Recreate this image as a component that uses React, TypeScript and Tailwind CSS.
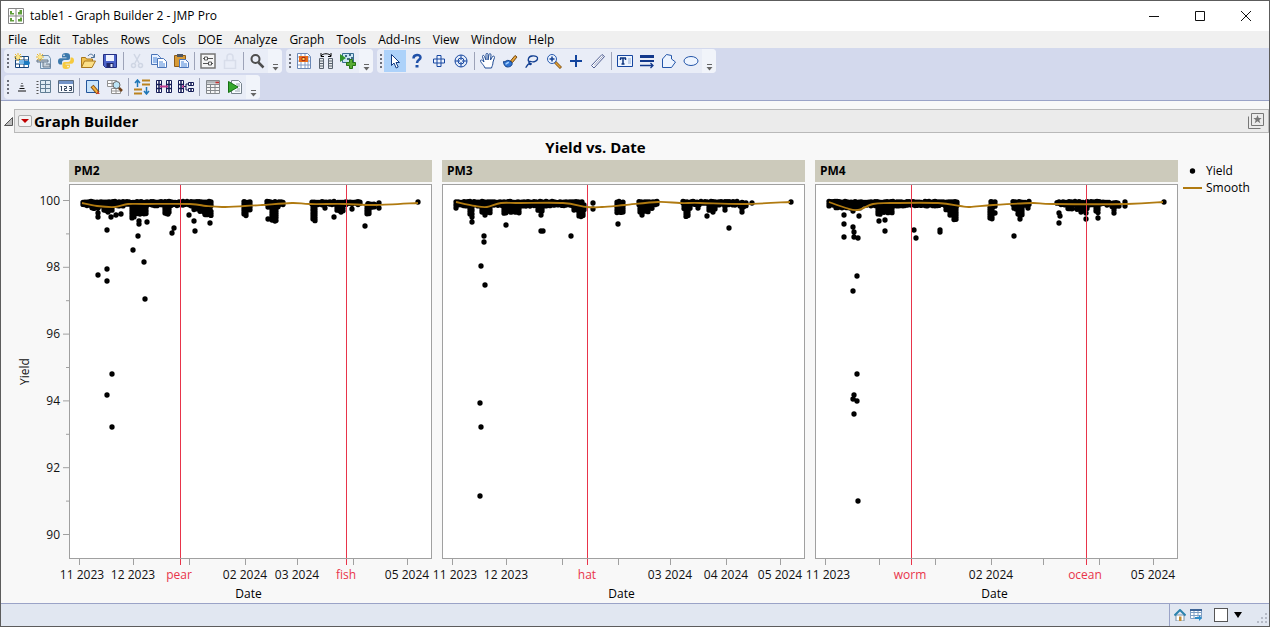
import type { ReactNode } from 'react';
import cn from 'clsx';

type Point = [number, number];
// x from, x to, y from, y to
type Band = [number, number, number, number];
type Label = { x: number; text: string; marker?: boolean };

type Panel = {
  name: string;
  left: number;
  markers: number[];
  labels: Label[];
  bands: Band[];
  points: Point[];
  smooth: Point[];
};

const PLOT_TOP = 184;
const PLOT_WIDTH = 363;
const PLOT_HEIGHT = 375;
const MONTH_TICKS = [10.5, 64.5, 120.5, 176.5, 228.5, 284.5, 338.5];

const menus = [
  'File', 'Edit', 'Tables', 'Rows', 'Cols', 'DOE', 'Analyze',
  'Graph', 'Tools', 'Add-Ins', 'View', 'Window', 'Help',
];

const panels: Panel[] = [
  {
    name: 'PM2',
    left: 69,
    markers: [180.5, 346.5],
    labels: [
      { x: 82, text: '11 2023' },
      { x: 133, text: '12 2023' },
      { x: 179, text: 'pear', marker: true },
      { x: 245, text: '02 2024' },
      { x: 297, text: '03 2024' },
      { x: 346, text: 'fish', marker: true },
      { x: 407, text: '05 2024' },
    ],
    bands: [
      [83, 211, 202, 205], [92, 98, 205, 208], [104, 112, 206, 210], [132, 134, 206, 217],
      [138, 141, 206, 214], [144, 147, 206, 213], [165, 169, 206, 213], [194, 211, 205, 209],
      [200, 211, 208, 212], [205, 211, 211, 215], [244, 250, 202, 209], [244, 247, 208, 215],
      [267, 284, 202, 204], [268, 279, 203, 207], [272, 276, 206, 220], [312, 361, 202, 204],
      [313, 316, 205, 220], [337, 343, 204, 210], [368, 374, 204, 207], [367, 370, 206, 214],
    ],
    points: [
      [98, 213], [98, 217], [111, 217], [116, 215], [121, 214], [107, 230], [108, 212],
      [139, 221], [139, 224], [147, 222], [138, 236], [133, 250], [144, 262], [107, 269],
      [98, 275], [107, 281], [145, 299], [168, 214], [174, 228], [172, 233], [189, 215],
      [194, 221], [195, 231], [210, 223], [112, 374], [107, 395], [112, 427], [268, 219],
      [275, 221], [325, 208], [334, 217], [341, 212], [352, 209], [365, 226], [379, 203],
      [379, 208], [418, 202],
    ],
    smooth: [
      [82, 203], [97, 206], [115, 207], [128, 204], [145, 204], [190, 204], [206, 206],
      [222, 207], [245, 206], [262, 205], [292, 203], [310, 204], [345, 204], [375, 205],
      [418, 203],
    ],
  },
  {
    name: 'PM3',
    left: 442,
    markers: [587.5],
    labels: [
      { x: 455, text: '11 2023' },
      { x: 506, text: '12 2023' },
      { x: 587, text: 'hat', marker: true },
      { x: 670, text: '03 2024' },
      { x: 726, text: '04 2024' },
      { x: 780, text: '05 2024' },
    ],
    bands: [
      [456, 583, 202, 205], [470, 473, 205, 213], [482, 490, 205, 212], [504, 507, 206, 213],
      [511, 519, 205, 212], [538, 543, 205, 210], [574, 584, 205, 210], [579, 584, 209, 216],
      [617, 623, 202, 212], [639, 657, 202, 204], [640, 652, 204, 208], [640, 648, 208, 212],
      [683, 738, 202, 204], [684, 690, 204, 209], [686, 688, 208, 216], [709, 715, 205, 210],
      [740, 746, 203, 206],
    ],
    points: [
      [472, 217], [472, 222], [456, 208], [485, 215], [484, 236], [484, 242], [481, 266],
      [485, 285], [506, 225], [541, 215], [541, 231], [543, 231], [571, 236], [593, 203],
      [593, 209], [618, 224], [480, 403], [481, 427], [480, 496], [642, 215], [698, 208],
      [707, 216], [713, 212], [725, 210], [725, 207], [729, 228], [742, 209], [742, 212],
      [752, 203], [791, 202],
    ],
    smooth: [
      [456, 202], [475, 206], [487, 207], [501, 203], [520, 203], [563, 203], [587, 207],
      [602, 207], [625, 205], [658, 202], [680, 203], [700, 203], [743, 204], [790, 202],
    ],
  },
  {
    name: 'PM4',
    left: 815,
    markers: [911.5, 1086.5],
    labels: [
      { x: 828, text: '11 2023' },
      { x: 910, text: 'worm', marker: true },
      { x: 991, text: '02 2024' },
      { x: 1085, text: 'ocean', marker: true },
      { x: 1153, text: '05 2024' },
    ],
    bands: [
      [829, 957, 202, 205], [836, 860, 204, 207], [878, 880, 205, 214], [884, 892, 205, 212],
      [946, 957, 205, 209], [950, 957, 208, 214], [954, 957, 213, 219], [991, 996, 202, 207],
      [990, 992, 207, 219], [1013, 1030, 202, 205], [1014, 1022, 204, 208],
      [1018, 1023, 207, 215], [1057, 1109, 202, 204], [1068, 1073, 204, 208],
      [1077, 1087, 204, 209], [1096, 1099, 204, 212], [1112, 1118, 203, 206],
    ],
    points: [
      [844, 215], [844, 224], [844, 237], [853, 211], [859, 216], [853, 227], [854, 232],
      [854, 237], [858, 238], [857, 276], [853, 291], [879, 221], [885, 220], [885, 231],
      [914, 230], [916, 238], [940, 230], [940, 232], [857, 374], [854, 395], [853, 399],
      [857, 401], [854, 414], [858, 501], [995, 213], [1014, 236], [1020, 219], [1028, 208],
      [1059, 213], [1060, 216], [1059, 223], [1081, 212], [1086, 213], [1086, 219],
      [1098, 218], [1114, 210], [1114, 213], [1119, 206], [1125, 202], [1125, 206],
      [1164, 202],
    ],
    smooth: [
      [829, 202], [846, 208], [858, 210], [873, 204], [890, 203], [938, 203], [960, 206],
      [970, 207], [993, 205], [1032, 203], [1053, 204], [1127, 204], [1163, 202],
    ],
  },
];

// repeatable noise in -1..1
const noise = (x: number, y: number) => {
  const value = Math.sin(x * 127.1 + y * 311.7) * 43758.5;
  return (value - Math.floor(value)) * 2 - 1;
};

const fillBand = ([x0, x1, y0, y1]: Band) => {
  const result: Point[] = [];
  for (let x = x0; x <= x1; x += 2) {
    for (let y = y0; y < y1; y += 2) {
      result.push([x, y + noise(x, y) * 0.6]);
    }
    result.push([x, y1 + noise(x, y1)]);
  }
  return result;
};

const dotsPath = (points: Point[]) =>
  points.map(([x, y]) => `M${x.toFixed(1)} ${y.toFixed(1)}h0.01`).join('');

const smoothPath = (points: Point[]) =>
  points.slice(1).reduce((d, [x, y], i) => {
    const [px, py] = points[i];
    const [bx, by] = points[i - 1] ?? points[i];
    const [nx, ny] = points[i + 2] ?? [x, y];
    return `${d}C${px + (x - bx) / 6} ${py + (y - by) / 6} ${x - (nx - px) / 6} ${y - (ny - py) / 6} ${x} ${y}`;
  }, `M${points[0][0]} ${points[0][1]}`);

const percent = (value: number, total: number) => `${(value / total) * 100}%`;

const Glyph = ({ children }: { children: ReactNode }) => (
  <svg viewBox="0 0 16 16" className="h-4 w-4" fill="none" aria-hidden="true">
    {children}
  </svg>
);

const GRID = 'M1.5 3.5h13v11h-13zM1.5 7h13M1.5 11h13M5.5 3.5v11M10 3.5v11';
const STAR = 'M4 0v8M0 4h8M1 1l6 6M7 1l-6 6';

const icons: Record<string, ReactNode> = {
  'New Data Table': (
    <>
      <path d={GRID} fill="#fff" stroke="#16457c" />
      <path d="M5 7h5v4h-5z" fill="#79b8e8" />
      <path d="M10 8h4v-2l2 4-2 4v-2h-4z" fill="#1b7ac0" />
      <path d={STAR} stroke="#e9b62c" />
      <circle cx="4" cy="4" r="2" fill="#fbe68a" />
    </>
  ),
  'New Script': (
    <>
      <path d="M4.5 2.5h8l2 3v10h-10z" fill="#dcebf8" stroke="#6f8fae" />
      <path d="M1 7h11v2H1zM7 9v5h7v-3h-4" fill="#c5ced6" stroke="#66798c" />
      <path d={STAR} stroke="#e9b62c" />
      <circle cx="4" cy="4" r="2" fill="#fbe68a" />
    </>
  ),
  'New Python Script': (
    <>
      <path d="M8 0c-3 0-4 1-4 3v1.500h4.500v.8H2.500C1 5.300 0 6.500 0 8.500s1 3 2 3h2V9.500c0-1.500 1-2.500 2.500-2.500h3.500c1.300 0 2-1 2-2V3c0-2-1-3-4-3z" fill="#3b79ad" />
      <path d="M8 16c3 0 4-1 4-3v-1.500H7.500v-.8h6c1.500 0 2.500-1.200 2.500-3.200s-1-3-2-3h-1.500v2c0 1.500-1 2.500-2.500 2.500H6.500c-1.300 0-2 1-2 2v2c0 2 .5 3 3.500 3z" fill="#f6ca3f" />
      <circle cx="6" cy="2.300" r=".8" fill="#fff" />
      <circle cx="10" cy="13.600" r=".8" fill="#fff" />
    </>
  ),
  Open: (
    <>
      <path d="M1.500 14.500v-10h4l1 1.500h6v3" fill="#f2c452" stroke="#a9771d" />
      <path d="M1.500 14.500l3-6.500h11l-3.500 6.500z" fill="#fbdf87" stroke="#a9771d" />
      <path d="M8 3c2-3 5-2 6 1M14.500 1v3.500H11" stroke="#4b6f97" />
    </>
  ),
  Save: (
    <>
      <path d="M1.500 1.500h13v13h-11l-2-2z" fill="#4b63c9" stroke="#242f83" />
      <path d="M4 2h8v6H4z" fill="#eef2ff" />
      <path d="M4.500 10h7v4.500h-7z" fill="#20286b" />
      <path d="M8.500 11h2v3h-2z" fill="#dfe5fa" />
    </>
  ),
  Cut: (
    <>
      <path d="M5 1l5 9M11 1L6 10" stroke="#cfd6e4" strokeWidth="1.500" />
      <circle cx="4.500" cy="12.500" r="2" stroke="#cfd6e4" strokeWidth="1.500" />
      <circle cx="11.500" cy="12.500" r="2" stroke="#cfd6e4" strokeWidth="1.500" />
    </>
  ),
  Copy: (
    <>
      <path d="M.5 1.500h6l3 3v7h-9z" fill="#e8f1ff" stroke="#4a74b8" />
      <path d="M6.500 5.500h6l3 3v6h-9z" fill="#fff" stroke="#4a74b8" />
      <path d="M2 5h4M2 7h4M2 9h4M8 9h4M8 11h6M8 13h6" stroke="#4a86d8" />
    </>
  ),
  Paste: (
    <>
      <path d="M1.500 2.500h11v11h-11z" fill="#d89b37" stroke="#8c5b19" />
      <path d="M4 1h6v3H4z" fill="#50565e" />
      <path d="M6.500 6.500h6l3 3v5h-9z" fill="#f4f8ff" stroke="#4a74b8" />
      <path d="M8 9h3M8 11h6M8 13h6" stroke="#4a86d8" />
    </>
  ),
  Preferences: (
    <>
      <path d="M1 1h14v14H1z" fill="#f6f6f6" stroke="#757575" strokeWidth="1.500" />
      <path d="M3 5.500h10M3 10.500h10" stroke="#555" />
      <path d="M4.500 4h3v3h-3zM8.500 9h3v3h-3z" fill="#fff" stroke="#555" />
    </>
  ),
  Lock: <path d="M2.500 7.500h11v8h-11zM5 7V4a3 3 0 016 0v3" stroke="#d8ddea" strokeWidth="1.500" />,
  Search: (
    <>
      <circle cx="6.500" cy="6" r="4" stroke="#4d4d4d" strokeWidth="2" />
      <path d="M9.500 9.500l5 5" stroke="#4d4d4d" strokeWidth="2.500" />
    </>
  ),
  'Graph Builder': (
    <>
      <path d="M1.500.5h10l3 3v12h-13z" fill="#fff" stroke="#6b88b6" />
      <path d="M2 4h12M2 8h12M2 12h12M5 1v14M9 1v14M12 3v12" stroke="#829ac5" />
      <path d="M3 3h9v6H3z" fill="#e86b18" />
      <path d="M6 4.500h3v3H6z" fill="#ffd65c" stroke="#a52e18" />
    </>
  ),
  Distribution: (
    <>
      <path d="M1.500 5.500h4v10h-4zM10.500 5.500h4v10h-4z" fill="#e6e9ec" stroke="#59626e" />
      <path d="M2 8h3M2 10.500h3M2 13h3M11 8h3M11 10.500h3M11 13h3" stroke="#59626e" />
      <path d="M3 3c2-3 8-3 10 0M3 0v3.500h3M13 0v3.500h-3" stroke="#000" />
    </>
  ),
  'Run Add-In': (
    <>
      <path d="M2.500.5h11v9h-11z" fill="#c9e6f5" stroke="#366c91" />
      <path d="M5 3h2M9 2h2M7 6h3M11 5h2" stroke="#183f63" strokeWidth="1.500" />
      <path d="M0 1l6 4-6 4z" fill="#31942c" />
      <path d="M9.500 6.500h3v3h3v3h-3v3h-3v-3h-3v-3h3z" fill="#59ac35" stroke="#277316" />
    </>
  ),
  Arrow: <path d="M4.500 1.500v11l2.500-2.500 2.200 5 2-1-2.200-4.500h3.500z" fill="#fff" stroke="#123a80" />,
  Help: (
    <>
      <path d="M4.500 5.500c0-4.500 7-4.500 7-1 0 2.500-3.500 2-3.500 5.500" stroke="#1f50a8" strokeWidth="2.500" />
      <path d="M6.500 12h3v2.500h-3z" fill="#1f50a8" />
    </>
  ),
  Crosshair: (
    <path d="M6 2.500h4V6h3.500v4H10v3.500H6V10H2.500V6H6zM6 6h4v4H6z" fill="#eef4ff" stroke="#1646a0" />
  ),
  Target: (
    <>
      <circle cx="8" cy="8" r="6" fill="#e4edfb" stroke="#1646a0" />
      <circle cx="8" cy="8" r="3" stroke="#1646a0" />
      <path d="M8 2v5M8 9v5M2 8h5M9 8h5" stroke="#1646a0" />
    </>
  ),
  Grabber: (
    <path d="M5 15c-1-3-5-6-4.500-7.500S3 8 4 9L2.500 3.500c0-1.500 1.500-1.500 2 0L6 7V1.500c0-1.500 2-1.500 2 0V7l1-5.500c.5-1.500 2-1 2 .5L10.500 7l2-3.500c1-1 2.500 0 2 1L13 9c0 3-1 4-1.500 6z" fill="#fff" stroke="#1f4b94" />
  ),
  Brush: (
    <>
      <path d="M8.500 8l4.500-5.500 2 1.500L10.500 9.500z" fill="#e8a63b" stroke="#744814" />
      <path d="M1.500 8.500c2 1 3-2 5.500-1l3 2c1 3-2 4.500-4.500 4.500s-4-2.500-4-5.500z" fill="#2e72d0" stroke="#174489" />
      <path d="M3.500 11c1.500 0 2-2 3.500-1.500" stroke="#a7d2ff" strokeWidth="1.500" />
    </>
  ),
  Lasso: (
    <path d="M6 9C3 8 4 3.500 8 3s6 1 5.500 3S10 9.500 7 8.500 4.500 12 6.500 11.500 6 9 4 11.500s-1.500 2.500-2.500 3" stroke="#123f91" strokeWidth="1.300" />
  ),
  Magnifier: (
    <>
      <path d="M9 9l6 6" stroke="#805013" strokeWidth="3" />
      <path d="M9.500 9.500l5 5" stroke="#e1a137" strokeWidth="1.500" />
      <circle cx="6" cy="6" r="4.500" fill="#edf4ff" stroke="#285bb0" />
      <path d="M6 3.500v5M3.500 6h5" stroke="#123f91" strokeWidth="1.500" />
    </>
  ),
  Annotate: <path d="M8 2v12M2 8h12" stroke="#12449d" strokeWidth="2" />,
  Ruler: (
    <>
      <path d="M1.500 12.500L12 1.500l2.500 2L4 15z" fill="#fff" stroke="#4e5d91" />
      <path d="M4 12.500L13 3" stroke="#9aa4c6" />
    </>
  ),
  Text: (
    <>
      <path d="M.5 2.500h15v11H.5z" fill="#eef5ff" stroke="#1646a0" />
      <path d="M3 5h6M6 5v6M4.500 11h3M3.500 5v2M8.500 5v2" stroke="#0d347f" strokeWidth="1.500" />
      <path d="M11 6h3M11 8h3M11 10h3" stroke="#91add8" />
    </>
  ),
  Line: (
    <>
      <path d="M1 3.500h14" stroke="#12388b" strokeWidth="3" />
      <path d="M1 8h14" stroke="#12388b" strokeWidth="2" />
      <path d="M1 12.500h13M11.500 10l2.500 2.500-2.500 2.500" stroke="#12388b" strokeWidth="1.300" />
    </>
  ),
  Polygon: <path d="M1.500 6l4-4.500 5 1V6l4 3-4 5.500h-9z" fill="#edf4ff" stroke="#2456a9" />,
  Oval: <ellipse cx="8" cy="8" rx="7" ry="4.500" fill="#edf4ff" stroke="#2456a9" />,
  'Sort Rows': <path d="M7.500 4.500h1M6.500 7h3M5.500 9.500h5M4 12h8" stroke="#111" />,
  'Row List': (
    <>
      <path d="M4.500 1.500h10v12h-10zM4.500 5.500h10M4.500 9.500h10M9.500 1.500v12" fill="#e1edf5" stroke="#617e94" />
      <path d="M1.500 2v13" stroke="#555" strokeWidth="2" strokeDasharray="1 2" />
    </>
  ),
  'Column Info': (
    <>
      <path d="M.5 1.500h15v12H.5z" fill="#f8fbff" stroke="#596a7e" />
      <path d="M1 2h14v3H1z" fill="#7193c8" />
      <path d="M3.500 7v5M2.500 8l1-1M6 7.500h2.500v2H6.500v2H9M11 7.500h2.500v4H11M11.500 9.500h2" stroke="#34455d" />
    </>
  ),
  'Select Rows': (
    <>
      <path d="M1.500 1.500h12v12h-12z" fill="#c7e3fa" stroke="#23559b" />
      <path d="M7 7l6 7" stroke="#804a13" strokeWidth="4" />
      <path d="M7.500 7.500l5 6" stroke="#f2b23d" strokeWidth="2" />
      <path d="M12 12l3 3h-3z" fill="#d6422c" />
    </>
  ),
  'Find Rows': (
    <>
      <path d="M.5 1.500h9v6h-9zM.5 4.500h9M5 1.500v6M4.500 9.500h9v5h-9zM9 9v6M4.500 12h9" fill="#fff" stroke="#929292" />
      <circle cx="9.500" cy="6" r="3.500" fill="#bce5f8" stroke="#666" />
      <path d="M12 9l3 3" stroke="#714017" strokeWidth="2.500" />
    </>
  ),
  Sort: (
    <>
      <path d="M3.500 8V1M1 4l2.500-3L6 4M12.500 8v7M10 12l2.500 3 2.500-3" stroke="#1f77b7" strokeWidth="1.500" />
      <path d="M8 1.500h8M8 5.500h8M0 10.500h8M0 14.500h8" stroke="#bb831f" strokeWidth="2" />
    </>
  ),
  Join: (
    <>
      <path d="M.5 1.500h5v12h-5zM10.500 1.500h5v12h-5z" fill="#fff" stroke="#151c57" />
      <path d="M0 5.500h6M0 9.500h6M10 5.500h6M10 9.500h6M3 1v13M13 1v13" stroke="#151c57" strokeWidth="1.500" />
      <path d="M4 7.500h8" stroke="#c13c91" strokeWidth="2" />
    </>
  ),
  Split: (
    <>
      <path d="M.5 1.500h5v12h-5zM10.500 3.500h5v3h-5zM10.500 9.500h5v3h-5z" fill="#fff" stroke="#151c57" />
      <path d="M0 5.500h6M0 9.500h6M3 1v13M13 3v4M13 9v4" stroke="#151c57" strokeWidth="1.500" />
      <path d="M6 7.500h2M8 5v6M8 5h2.500M8 11h2.500" stroke="#151c57" />
      <path d="M4 7.500h2" stroke="#c13c91" strokeWidth="2" />
    </>
  ),
  Formula: (
    <>
      <path d="M1.500 1.500h13v13h-13zM1.500 5.500h13M5.500 5.500v9M10 5.500v9M1.500 8.500h13M1.500 11.500h13" fill="#f5f5f5" stroke="#84888c" />
      <path d="M2 2h12v2.500H2z" fill="#b2b6ba" />
      <path d="M10.500 3.500h3.500" stroke="#c82f2f" strokeWidth="1.500" />
    </>
  ),
  'Run Script': (
    <>
      <path d="M4.500 1.500h7l3 3v10h-10z" fill="#f7fbff" stroke="#77838d" />
      <path d="M9 5h4M10 7h3M10 10h3M8 12h5" stroke="#9ba6b0" />
      <path d="M1.500 2.500L11 8l-9.500 5.500z" fill="#36a82e" stroke="#167013" />
    </>
  ),
};

const toolbars = [
  [
    [
      ['New Data Table', 'New Script', 'New Python Script', 'Open', 'Save'],
      ['Cut', 'Copy', 'Paste'],
      ['Preferences', 'Lock'],
      ['Search'],
    ],
    [['Graph Builder', 'Distribution', 'Run Add-In']],
    [
      ['Arrow', 'Help', 'Crosshair', 'Target'],
      ['Grabber', 'Brush', 'Lasso', 'Magnifier', 'Annotate', 'Ruler'],
      ['Text', 'Line', 'Polygon', 'Oval'],
    ],
  ],
  [
    [
      ['Sort Rows', 'Row List', 'Column Info'],
      ['Select Rows', 'Find Rows'],
      ['Sort', 'Join', 'Split'],
      ['Formula', 'Run Script'],
    ],
  ],
];

const ToolStrip = ({ groups }: { groups: string[][] }) => (
  <div className="flex h-6 items-center rounded-sm bg-[#e9edf7]">
    <svg viewBox="0 0 7 16" className="h-4 w-[7px]" aria-hidden="true">
      <path d="M4 1v14" stroke="#6b6f7a" strokeWidth="2" strokeDasharray="2 2" />
    </svg>
    {groups.map((group, i) => (
      <div key={group[0]} className="flex items-center">
        {i > 0 && <span className="mx-0.5 h-[18px] w-px bg-[#9da3b8]" />}
        {group.map((name) => (
          <button
            key={name}
            type="button"
            aria-label={name}
            className={cn(
              'flex h-[22px] w-[22px] items-center justify-center',
              name === 'Arrow' && 'bg-[#add2fa]',
            )}
          >
            <Glyph>{icons[name]}</Glyph>
          </button>
        ))}
      </div>
    ))}
    <button
      type="button"
      aria-label="Toolbar options"
      className="flex h-6 w-3.5 items-end justify-center rounded-r-sm bg-[#f1f4fa] pb-0.5"
    >
      <svg viewBox="0 0 7 7" className="h-[7px] w-[7px]">
        <path d="M1 .5h5" stroke="#666" />
        <path d="M.5 3h6l-3 3.500z" fill="#666" />
      </svg>
    </button>
  </div>
);

const TitleBar = () => (
  <header className="flex h-[30px] shrink-0 items-center bg-white pl-[7px]">
    <svg viewBox="0 0 16 16" className="h-4 w-4" aria-hidden="true">
      <path d="M.5.5h15v15H.5zM8 .5v15M.5 8h15" fill="#fff" stroke="#858585" />
      <path d="M2 3h2v2h2v1.500H2zM10 6.500V4h1.500V2H14v4.500zM2 13.500V10h2v2h2v1.500zM10 13.500V11h2V9.500h2v4z" fill="#5f9e3a" />
    </svg>
    <h1 className="ml-1.5 flex-1 text-[12px]">table1 - Graph Builder 2 - JMP Pro</h1>
    <div className="flex">
      {[
        ['Minimize', 'M0 5.500h10'],
        ['Maximize', 'M.5.5h9v9h-9z'],
        ['Close', 'M0 0l10 10M10 0L0 10'],
      ].map(([name, d]) => (
        <button
          key={name}
          type="button"
          aria-label={name}
          className="flex h-[30px] w-[46px] items-center justify-center"
        >
          <svg viewBox="0 0 10 10" className="h-2.5 w-2.5 overflow-visible">
            <path d={d} fill="none" stroke="#111" />
          </svg>
        </button>
      ))}
    </div>
  </header>
);

const PlotPanel = ({ panel }: { panel: Panel }) => {
  const { name, left, markers, labels, bands, points, smooth } = panel;
  const at = (x: number) => percent(x - left, PLOT_WIDTH);
  return (
    <section className="flex min-w-0 flex-1 flex-col">
      <h3 className="mb-0.5 h-[22px] bg-[#cccabb] pl-[5px] text-[12px] leading-[22px] font-bold">
        {name}
      </h3>
      <div className="relative min-h-60 flex-1 border border-[#a0a0a0] bg-white">
        <svg
          viewBox={`${left + 1} ${PLOT_TOP + 1} ${PLOT_WIDTH - 2} ${PLOT_HEIGHT - 2}`}
          preserveAspectRatio="none"
          className="absolute inset-0 h-full w-full"
          fill="none"
        >
          <path
            d={dotsPath([...bands.flatMap(fillBand), ...points])}
            stroke="#000"
            strokeWidth="5.300"
            strokeLinecap="round"
            vectorEffect="non-scaling-stroke"
          />
          {markers.map((x) => (
            <path key={x} d={`M${x} 184v375`} stroke="#e8344a" vectorEffect="non-scaling-stroke" />
          ))}
          <path
            d={smoothPath(smooth)}
            stroke="#b07a10"
            strokeWidth="1.800"
            vectorEffect="non-scaling-stroke"
          />
        </svg>
      </div>
      <svg className="h-6 w-full shrink-0 overflow-visible text-[12px]">
        {MONTH_TICKS.map((x) => (
          <line
            key={x}
            x1={percent(x, PLOT_WIDTH)}
            x2={percent(x, PLOT_WIDTH)}
            y2="6"
            stroke="#a0a0a0"
          />
        ))}
        {markers.map((x) => (
          <line key={x} x1={at(x)} x2={at(x)} y2="6" stroke="#e8344a" />
        ))}
        {labels.map(({ x, text, marker }) => (
          <text key={text} x={at(x)} y="20" textAnchor="middle" fill={marker ? '#e8344a' : '#111'}>
            {text}
          </text>
        ))}
      </svg>
      <p className="h-5 pr-1 text-center text-[12px] leading-[22px]">Date</p>
    </section>
  );
};

const YieldAxis = () => {
  const at = (value: number) => percent(16.5 + (100 - value) * 33.4, PLOT_HEIGHT);
  return (
    <div className="flex w-[68px] shrink-0 flex-col pt-6 pb-11">
      <svg className="w-full flex-1 overflow-visible text-[12px]">
        {[100, 98, 96, 94, 92, 90].map((value) => (
          <g key={value}>
            <line x1="62" x2="68" y1={at(value)} y2={at(value)} stroke="#a0a0a0" />
            <text x="59" y={at(value)} dy="4" textAnchor="end" fill="#111">
              {value}
            </text>
          </g>
        ))}
        {[99, 97, 95, 93, 91].map((value) => (
          <line key={value} x1="65" x2="68" y1={at(value)} y2={at(value)} stroke="#a0a0a0" />
        ))}
        <svg x="28" y="50%" className="overflow-visible">
          <text textAnchor="middle" transform="rotate(-90)" fill="#111">
            Yield
          </text>
        </svg>
      </svg>
    </div>
  );
};

const Legend = () => (
  <ul className="mt-[29px] w-[91px] shrink-0 pl-[5px] text-[12px] leading-[17px]">
    <li className="flex items-center gap-1">
      <svg viewBox="0 0 19 10" className="h-2.5 w-[19px]">
        <circle cx="9.500" cy="5" r="2.700" />
      </svg>
      Yield
    </li>
    <li className="flex items-center gap-1">
      <svg viewBox="0 0 19 10" className="h-2.5 w-[19px]">
        <path d="M0 5h19" stroke="#b07a10" strokeWidth="2" />
      </svg>
      Smooth
    </li>
  </ul>
);

const StatusBar = () => (
  <footer className="flex h-[23px] shrink-0 items-center justify-end border-t border-[#9aa3c7] bg-[#e1e7f1]">
    <div className="flex h-full items-center border-l border-[#9aa3c7] pl-1">
      <button type="button" aria-label="Home window" className="mr-1">
        <svg viewBox="0 0 12 12" className="h-3 w-3">
          <path d="M2 6h8v6H2z" fill="#fff" stroke="#7892a8" />
          <path d="M.5 6.500L6 1l5.500 5.500" fill="none" stroke="#2b83ae" strokeWidth="2" />
          <path d="M5 7.500h2.500V12H5z" fill="#c48c31" />
        </svg>
      </button>
      <button type="button" aria-label="Data table" className="mr-3">
        <svg viewBox="0 0 12 12" className="h-3 w-3">
          <path d="M.5.5h11v9H.5zM.5 3.500h11M.5 6.500h11M4 .5v9M8 .5v9" fill="#fff" stroke="#7f9fc4" />
          <path d="M0 0h12v2H0z" fill="#3d6496" />
          <path d="M5 8h4V6l3 3-3 3v-2H5z" fill="#2d8cc8" />
        </svg>
      </button>
      <input
        type="checkbox"
        aria-label="Link window"
        className="h-3.5 w-3.5 appearance-none border border-[#555] bg-white"
      />
      <button type="button" aria-label="Window options" className="ml-1.5">
        <svg viewBox="0 0 8 6" className="h-1.5 w-2">
          <path d="M0 0h8L4 6z" />
        </svg>
      </button>
      <svg viewBox="0 0 12 12" className="mt-2 mr-px ml-3.5 h-3 w-3" aria-hidden="true">
        <path d="M9 1h2M9 5h2M5 5h2M9 9h2M5 9h2M1 9h2" stroke="#b5bac6" strokeWidth="2" />
      </svg>
    </div>
  </footer>
);

const App = () => (
  <div className="flex min-h-screen flex-col border border-[#5c5c5c] bg-[#f8f8f8] font-['Open_Sans',sans-serif] text-black">
    <TitleBar />
    <nav className="flex h-[17px] shrink-0 items-center gap-3 bg-[#f0f0f0] pl-[7px] text-[12px] leading-4">
      {menus.map((menu) => (
        <button key={menu} type="button">
          {menu}
        </button>
      ))}
    </nav>
    <div className="flex shrink-0 flex-col gap-0.5 border-b border-[#9aa3c7] bg-[#d3d9ed] pt-px pb-px pl-[3px]">
      {toolbars.map((row, i) => (
        <div key={i} className="flex gap-1">
          {row.map((groups) => (
            <ToolStrip key={groups[0][0]} groups={groups} />
          ))}
        </div>
      ))}
    </div>
    <main className="flex flex-1 flex-col pt-2">
      <div className="flex items-center">
        <button type="button" aria-label="Collapse outline" className="mr-px ml-[3px]">
          <svg viewBox="0 0 9 9" className="h-[9px] w-[9px]">
            <path d="M8.500.5v8h-8z" fill="#bbb" stroke="#555" />
          </svg>
        </button>
        <div className="flex h-6 flex-1 items-center border border-[#b9b9b9] bg-[#ebebeb] pr-1 pl-[3px]">
          <button
            type="button"
            aria-label="Graph Builder options"
            className="flex h-3 w-3.5 items-center justify-center rounded-xs border border-[#aaa] bg-[#f4f4f4]"
          >
            <svg viewBox="0 0 8 4" className="h-1 w-2">
              <path d="M0 0h8L4 4z" fill="#c00000" />
            </svg>
          </button>
          <h2 className="ml-0.5 flex-1 text-[15px] leading-5 font-bold">Graph Builder</h2>
          <button type="button" aria-label="Add to favorites">
            <svg viewBox="0 0 16 16" className="h-4 w-4" fill="none">
              <path d="M3.500.5h12v12h-12zM.5 3.500v12h12" stroke="#777" />
              <path d="M9.500 2l1.200 3h3l-2.400 2 1 3.200-2.800-2-2.800 2 1-3.200-2.400-2h3z" fill="#777" />
            </svg>
          </button>
        </div>
      </div>
      <div className="flex flex-1">
        <div className="flex min-w-0 flex-1 flex-col">
          <h2 className="h-[27px] pt-1 pl-3 text-center text-[15px] leading-5 font-bold">
            Yield vs. Date
          </h2>
          <div className="flex flex-1">
            <YieldAxis />
            <div className="flex min-w-0 flex-1 gap-2.5">
              {panels.map((panel) => (
                <PlotPanel key={panel.name} panel={panel} />
              ))}
            </div>
          </div>
        </div>
        <Legend />
      </div>
    </main>
    <StatusBar />
  </div>
);

export default App;
